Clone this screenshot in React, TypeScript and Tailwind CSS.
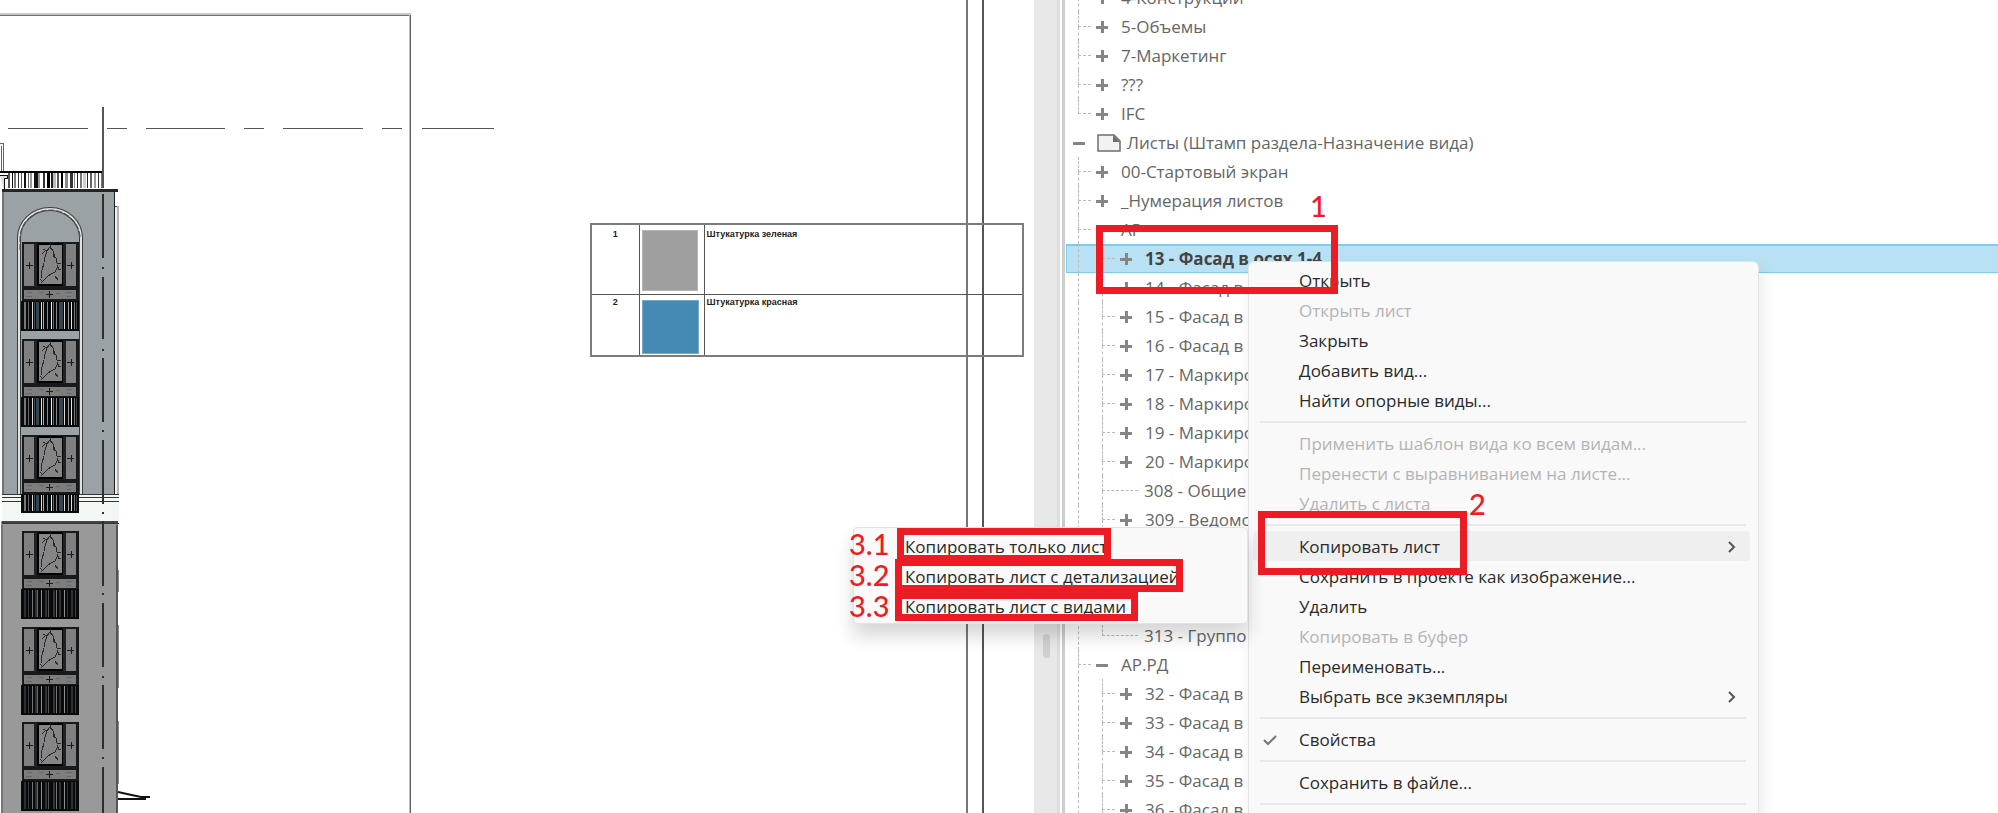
import { ReactNode } from "react";
import clsx from "clsx";

interface TreeRow {
  label: string;
  depth: 0 | 1 | 2;
  toggle?: "plus" | "minus";
  last?: boolean;
  selected?: boolean;
}

const rows: TreeRow[] = [
  { label: "4-Конструкции", depth: 1, toggle: "plus" },
  { label: "5-Объемы", depth: 1, toggle: "plus" },
  { label: "7-Маркетинг", depth: 1, toggle: "plus" },
  { label: "???", depth: 1, toggle: "plus" },
  { label: "IFC", depth: 1, toggle: "plus", last: true },
  { label: "Листы (Штамп раздела-Назначение вида)", depth: 0, toggle: "minus" },
  { label: "00-Стартовый экран", depth: 1, toggle: "plus" },
  { label: "_Нумерация листов", depth: 1, toggle: "plus" },
  { label: "АР", depth: 1, toggle: "minus" },
  { label: "13 - Фасад в осях 1-4", depth: 2, toggle: "plus", selected: true },
  { label: "14 - Фасад в о", depth: 2, toggle: "plus" },
  { label: "15 - Фасад в о", depth: 2, toggle: "plus" },
  { label: "16 - Фасад в о", depth: 2, toggle: "plus" },
  { label: "17 - Маркиро", depth: 2, toggle: "plus" },
  { label: "18 - Маркиро", depth: 2, toggle: "plus" },
  { label: "19 - Маркиро", depth: 2, toggle: "plus" },
  { label: "20 - Маркиро", depth: 2, toggle: "plus" },
  { label: "308 - Общие", depth: 2 },
  { label: "309 - Ведомо", depth: 2, toggle: "plus" },
  { label: "", depth: 2 },
  { label: "", depth: 2 },
  { label: "", depth: 2 },
  { label: "313 - Группо", depth: 2, last: true },
  { label: "АР.РД", depth: 1, toggle: "minus" },
  { label: "32 - Фасад в о", depth: 2, toggle: "plus" },
  { label: "33 - Фасад в о", depth: 2, toggle: "plus" },
  { label: "34 - Фасад в о", depth: 2, toggle: "plus" },
  { label: "35 - Фасад в о", depth: 2, toggle: "plus" },
  { label: "36 - Фасад в о", depth: 2, toggle: "plus" },
];

interface MenuEntry {
  label: string;
  disabled?: boolean;
  arrow?: boolean;
  checked?: boolean;
  active?: boolean;
}

const menuGroups: MenuEntry[][] = [
  [
    { label: "Открыть" },
    { label: "Открыть лист", disabled: true },
    { label: "Закрыть" },
    { label: "Добавить вид..." },
    { label: "Найти опорные виды..." },
  ],
  [
    { label: "Применить шаблон вида ко всем видам...", disabled: true },
    { label: "Перенести с выравниванием на листе...", disabled: true },
    { label: "Удалить с листа", disabled: true },
  ],
  [
    { label: "Копировать лист", arrow: true, active: true },
    { label: "Сохранить в проекте как изображение..." },
    { label: "Удалить" },
    { label: "Копировать в буфер", disabled: true },
    { label: "Переименовать..." },
    { label: "Выбрать все экземпляры", arrow: true },
  ],
  [{ label: "Свойства", checked: true }],
  [{ label: "Сохранить в файле..." }],
];

const submenu = [
  "Копировать только лист",
  "Копировать лист с детализацией",
  "Копировать лист с видами",
];

/* ---------- drawing ---------- */

// x, width, colour of every baluster inside a 58px wide railing
const upperBars: [number, number, string][] = [
  [3, 2, "#777"], [7, 1, "#666"], [11, 1, "#d8d8d8"], [13, 1, "#3c4850"], [15, 3, "#39454c"],
  [20, 1, "#e0e0e0"], [22, 1, "#aaa"], [26, 1, "#8a8a8a"], [30, 1, "#f0f0f0"], [32, 1, "#666"],
  [35, 1, "#888"], [38, 4, "#39454c"], [43, 1, "#d8d8d8"], [47, 1, "#999"], [50, 1, "#e0e0e0"],
  [53, 1, "#777"], [55, 1, "#444"],
];
const lowerBars: [number, number, string][] = [
  [3, 2, "#2e3033"], [7, 1, "#3a3c3f"], [11, 1, "#777"], [14, 2, "#303336"], [16, 1, "#666"],
  [20, 1, "#8a8a8a"], [24, 2, "#2e3033"], [27, 1, "#555"], [32, 2, "#303336"], [35, 1, "#777"],
  [38, 2, "#2e3033"], [43, 1, "#909090"], [46, 1, "#333"], [50, 2, "#303336"], [54, 1, "#444"],
];
const roofBars: [number, number, string][] = [
  [8, 2, "#555"], [12, 1, "#111"], [14, 2, "#777"], [18, 1, "#333"], [21, 1, "#555"],
  [24, 2, "#111"], [28, 1, "#666"], [30, 2, "#999"], [34, 4, "#111"], [38, 2, "#999"],
  [43, 2, "#333"], [47, 3, "#000"], [51, 2, "#222"], [53, 3, "#bbb"], [57, 2, "#555"],
  [61, 2, "#000"], [65, 3, "#888"], [70, 3, "#333"], [74, 1, "#888"], [77, 1, "#222"],
  [80, 2, "#777"], [83, 3, "#ccc"], [87, 1, "#222"], [90, 2, "#666"], [94, 2, "#999"],
  [98, 1, "#333"], [101, 1, "#777"],
];

const Railing = ({ y, height, bars }: { y: number; height: number; bars: [number, number, string][] }) => (
  <g transform={`translate(21 ${y})`}>
    <rect width="58" height={height} fill="#08090a" />
    {bars.map(([x, w, fill]) => (
      <rect key={x} x={x} y="1" width={w} height={height - 3} fill={fill} />
    ))}
  </g>
);

const Balcony = ({ y }: { y: number }) => (
  <g transform={`translate(22 ${y})`}>
    <rect width="57" height="59" fill="#17191b" />
    <rect x="2" y="2" width="10" height="42" fill="#808080" />
    <rect x="44" y="2" width="10" height="42" fill="#808080" />
    <rect x="12" y="1" width="4" height="44" fill="#202326" />
    <rect x="41" y="1" width="3" height="44" fill="#202326" />
    <rect x="15" y="1" width="26" height="43" fill="#000" />
    <rect x="17" y="3" width="23" height="39" fill="#858585" />
    <rect x="2" y="48" width="52" height="9" fill="#7d7d7d" />
    <path
      d="M28 2v3l-3 4-4-2M28 5l3 4v5l3 2M25 9l-2 6-1 5M34 16l1 5 4 0M35 23l2 5 2-1M22 21l-2 7-1 8M19 41l6-6 4-3 4-2 2-4M31 11l2 3M33 34l3 4M20 12l3-3M18 37l3 3"
      stroke="#26282a"
      strokeWidth="1"
      fill="none"
    />
    <path d="M4 23h7M7 20v7M45 23h7M49 20v7M24 52h7M27 49v7" stroke="#1a1a1a" strokeWidth="1" fill="none" />
    <path d="M5 50h5M4 54h6M17 50h4M34 51h4M44 50h6M45 54h4" stroke="#666" strokeWidth="1" fill="none" />
  </g>
);

const Facade = () => (
  <svg className="absolute inset-0" width="1034" height="813" shapeRendering="crispEdges" aria-hidden="true">
    {/* sheet frame */}
    <rect x="0" y="13" width="411" height="2" fill="#c8c8c8" />
    <rect x="0" y="15" width="411" height="1" fill="#707070" />
    <rect x="409" y="15" width="1" height="800" fill="#bdbdbd" />
    <rect x="410" y="15" width="1" height="800" fill="#606060" />
    {/* level line */}
    <path
      d="M8 128.5h80M107 128.5h20M146 128.5h79M244 128.5h20M283 128.5h80M382 128.5h20M422 128.5h72"
      stroke="#555"
    />
    {/* roof */}
    <path d="M0 143h3v28M1 146v25" stroke="#666" fill="none" />
    {roofBars.map(([x, w, fill]) => (
      <rect key={x} x={x} y="172" width={w} height="16" fill={fill} />
    ))}
    <rect x="0" y="171" width="104" height="2" fill="#000" />
    <path d="M0 175h7v3H4v12" stroke="#111" strokeWidth="1" fill="#ddd" />
    <rect x="102" y="107" width="2" height="81" fill="#555" />
    {/* upper wall */}
    <rect x="2" y="191" width="113" height="303" fill="#9aa2a6" />
    <rect x="2" y="191" width="2" height="303" fill="#6d7376" />
    <rect x="2" y="189" width="116" height="3" fill="#222427" />
    <rect x="114" y="191" width="1" height="303" fill="#222" />
    <rect x="115" y="206" width="3" height="288" fill="#f1f1f1" />
    <rect x="115" y="206" width="3" height="1" fill="#333" />
    <rect x="117" y="206" width="2" height="288" fill="#b4b4b4" />
    <path d="M19 494V238a31 29 0 0 1 62 0V494" stroke="#3a3d3f" strokeWidth="4" fill="none" shapeRendering="auto" />
    <path d="M19 494V238a31 29 0 0 1 62 0V494" stroke="#dfe2df" strokeWidth="2" fill="none" shapeRendering="auto" />
    <path d="M20 250V238a30 28 0 0 1 60 0" stroke="#4a4d4f" strokeDasharray="6 2" fill="none" shapeRendering="auto" />
    {/* lower wall */}
    <rect x="1" y="521" width="117" height="292" fill="#999" />
    <rect x="1" y="525" width="2" height="290" fill="#777" />
    <rect x="116" y="525" width="2" height="290" fill="#555" />
    {/* belt course */}
    <rect x="2" y="494" width="117" height="28" fill="#f2f7f4" />
    <path d="M2 494.5h117M2 497.5h117M2 501.5h117M2 523.5h117" stroke="#333" />
    <rect x="2" y="521" width="116" height="2" fill="#444" />
    <path d="M118.500 570v22M118.500 625v63M118.500 721v63" stroke="#888" />
    {/* windows */}
    <Balcony y={242} />
    <Balcony y={339} />
    <Balcony y={435} />
    <Balcony y={531} />
    <Balcony y={627} />
    <Balcony y={722} />
    <Railing y={301} height={30} bars={upperBars} />
    <Railing y={397} height={30} bars={upperBars} />
    <Railing y={494} height={19} bars={upperBars} />
    <Railing y={589} height={30} bars={lowerBars} />
    <Railing y={685} height={30} bars={lowerBars} />
    <Railing y={781} height={30} bars={lowerBars} />
    {/* axis */}
    <path
      d="M103 194v64M103 267v2M103 277v62M103 349v2M103 358v64M103 430v2M103 440v64M103 512v2M103 521v65M103 593v2M103 603v64M103 676v2M103 685v64M103 757v2M103 767v46"
      stroke="#2c2e30"
      strokeWidth="2"
    />
    <path d="M118 792l9 2 14 3h9M118 799h28" stroke="#111" strokeWidth="2" fill="none" shapeRendering="auto" />
    {/* right-hand sheet edges */}
    <rect x="966" y="0" width="2" height="813" fill="#777" />
    <rect x="982" y="0" width="2" height="813" fill="#555" />
  </svg>
);

const Legend = () => (
  <table className="absolute left-[590px] top-[223px] w-[434px] table-fixed border-collapse border-2 border-[#7c7c7c] font-['Liberation_Sans',sans-serif] text-[9px] leading-[14px] font-bold text-[#222]">
    <colgroup>
      <col className="w-12" />
      <col className="w-[65px]" />
      <col />
    </colgroup>
    <tbody>
      <tr className="h-[70px] align-top">
        <td className="border border-[#555] pt-[2px] text-center">1</td>
        <td className="border border-[#555] px-[2px] pt-[5px]">
          <div className="h-[61px] w-14 border border-[#b5b5b5] bg-[#9f9f9f]" />
        </td>
        <td className="border border-[#555] px-[2px] pt-[2px]">Штукатурка зеленая</td>
      </tr>
      <tr className="h-[62px] align-top">
        <td className="border border-[#555] pt-0 text-center">2</td>
        <td className="border border-[#555] px-[2px] pt-[5px]">
          <div className="h-[54px] w-[57px] border border-[#78aac8] bg-[#458ab4]" />
        </td>
        <td className="border border-[#555] px-[2px] pt-0">Штукатурка красная</td>
      </tr>
    </tbody>
  </table>
);

/* ---------- tree ---------- */

const Toggle = ({ kind, label }: { kind: "plus" | "minus"; label: string }) => (
  <button type="button" aria-label={label} className="size-3 shrink-0">
    <svg viewBox="0 0 12 12" className="block size-3 text-[#858585]" fill="currentColor">
      <rect y="5" width="12" height="3" />
      {kind === "plus" && <rect x="5" width="3" height="12" />}
    </svg>
  </button>
);

const Branch = ({ last, long }: { last?: boolean; long?: boolean }) => (
  <span className={clsx("flex h-full shrink-0 flex-col", long ? "mr-[6px] w-9" : "mr-[5px] w-[13px]")}>
    <span className="h-1/2 border-b border-l border-dashed border-[#bbb]" />
    <span className={clsx("h-1/2", !last && "border-l border-dashed border-[#bbb]")} />
  </span>
);

const SheetIcon = () => (
  <svg width="24" height="18" viewBox="0 0 24 18" className="mr-[6px] ml-3 shrink-0">
    <path d="M1 1h16l6 6v10H1z" fill="#f2f2f2" stroke="#6e6e6e" strokeWidth="1.500" />
    <path d="M16 1v7h7z" fill="#6e6e6e" />
  </svg>
);

const Row = ({ row }: { row: TreeRow }) => (
  <li
    role="treeitem"
    aria-selected={!!row.selected}
    className={clsx(
      "flex h-[29px] items-center whitespace-nowrap",
      row.depth === 0 ? "pl-[7px]" : "pl-3",
      row.selected
        ? "bg-[#b8e2f4] font-bold text-[#444] shadow-[inset_0_2px_0_#80cbe8,inset_1px_-1px_0_#80cbe8]"
        : "text-[#666]"
    )}
  >
    {row.depth === 2 && <span className="h-full w-6 shrink-0 border-l border-dashed border-[#bbb]" />}
    {row.depth > 0 && <Branch last={row.last} long={!row.toggle} />}
    {row.toggle && <Toggle kind={row.toggle} label={row.label} />}
    {row.depth === 0 && <SheetIcon />}
    <span className={clsx(row.toggle && row.depth > 0 && "pl-[13px]")}>{row.label}</span>
  </li>
);

/* ---------- menus ---------- */

const MenuItem = ({ entry, children }: { entry: MenuEntry; children?: ReactNode }) => (
  <li role="none" className="relative mr-2 ml-1">
    <button
      type="button"
      role="menuitem"
      disabled={entry.disabled}
      className={clsx(
        "flex h-[30px] w-full items-center rounded pt-[2px] pr-[14px] pl-[10px] text-left whitespace-nowrap",
        entry.active && "bg-[#efefef]",
        entry.disabled ? "text-[#b4b4b4]" : "text-[#2a2a2a]"
      )}
    >
      <span className="w-9 shrink-0">
        {entry.checked && (
          <svg width="14" height="12" viewBox="0 0 14 12" fill="none" stroke="#777" strokeWidth="2">
            <path d="M1 6l4 4 8-8" />
          </svg>
        )}
      </span>
      <span className="flex-1">{entry.label}</span>
      {entry.arrow && (
        <svg width="8" height="12" viewBox="0 0 8 12" fill="none" stroke="#555" strokeWidth="2">
          <path d="M1 1l5 5-5 5" />
        </svg>
      )}
    </button>
    {children}
  </li>
);

const Submenu = () => (
  <ul
    role="menu"
    className="absolute -top-1 right-full mr-[5px] w-[395px] rounded border border-[#e2e2e2] bg-[#f9f9f9] pt-[3px] pb-[2px] shadow-[0_12px_18px_rgba(0,0,0,0.16)]"
  >
    {submenu.map((label) => (
      <li key={label} role="none">
        <button
          type="button"
          role="menuitem"
          className="flex h-[30px] w-full items-center pt-[2px] pl-[51px] text-left whitespace-nowrap text-[#2a2a2a]"
        >
          {label}
        </button>
      </li>
    ))}
  </ul>
);

const ContextMenu = () => (
  <div
    role="menu"
    className="absolute top-[261px] left-[182px] w-[511px] rounded-md border border-[#e2e2e2] bg-[#f9f9f9] pt-[3px] pb-6 shadow-[4px_8px_16px_rgba(0,0,0,0.08)]"
  >
    {menuGroups.map((group) => (
      <ul key={group[0].label} role="group">
        {group.map((entry) => (
          <MenuItem key={entry.label} entry={entry}>
            {entry.active && <Submenu />}
          </MenuItem>
        ))}
        <li role="separator" className="mr-3 ml-[11px] flex h-[13px] items-center">
          <span className="h-[2px] w-full bg-[#e8e8e8]" />
        </li>
      </ul>
    ))}
  </div>
);

/* ---------- step marks ---------- */

const frames = [
  "left-[30px] top-[225px] h-[69px] w-[242px]",
  "left-[192px] top-[511px] h-16 w-[209px]",
  "-left-[169px] top-[528px] h-[34px] w-[214px]",
  "-left-[171px] top-[559px] h-[33px] w-[288px]",
  "-left-[171px] top-[592px] h-[29px] w-[243px]",
];

const steps = [
  { text: "1", place: "left-[244px] top-[192px]" },
  { text: "2", place: "left-[403px] top-[490px]" },
  { text: "3.1", place: "-left-[217px] top-[530px]" },
  { text: "3.2", place: "-left-[217px] top-[561px]" },
  { text: "3.3", place: "-left-[217px] top-[592px]" },
];

const StepMarks = () => (
  <div className="pointer-events-none">
    {frames.map((place) => (
      <div key={place} className={clsx("absolute border-7 border-[#ed1c24]", place)} />
    ))}
    {steps.map((step) => (
      <span
        key={step.text}
        className={clsx(
          "absolute font-[Lato,sans-serif] text-[29px] leading-7 font-medium whitespace-nowrap text-[#ed1c24]",
          step.place
        )}
      >
        {step.text}
      </span>
    ))}
  </div>
);

const App = () => {
  return (
    <div className="flex h-screen overflow-hidden bg-white font-['Open_Sans','Noto_Sans',sans-serif] text-[17px] leading-6">
      <main className="relative min-w-0 flex-[1034] overflow-hidden">
        <Facade />
        <Legend />
      </main>
      <div className="flex min-w-0 flex-[964]">
        <div className="relative w-[26px] shrink-0 border-r-3 border-[#dedede] bg-[#e8e8e8]">
          <div className="absolute top-[78%] left-[9px] h-6 w-[7px] rounded-sm bg-[#d0d0d0]" />
        </div>
        <div className="mr-px ml-[2px] w-[3px] shrink-0 bg-[#ccc]" />
        <aside className="relative min-w-0 flex-1">
          <ul role="tree" className="-mt-[17px]">
            {rows.map((row, index) => (
              <Row key={index} row={row} />
            ))}
          </ul>
          <ContextMenu />
          <StepMarks />
        </aside>
      </div>
    </div>
  );
};

export default App;
